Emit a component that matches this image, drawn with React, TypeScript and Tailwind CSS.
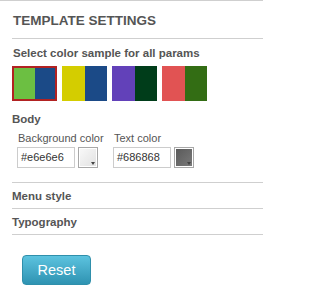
import React from 'react';

const swatches = [
  { left: '#6cbf42', right: '#1b4a87', active: true },
  { left: '#d4cd00', right: '#1b4a87', active: false },
  { left: '#6241b9', right: '#003d1a', active: false },
  { left: '#e15353', right: '#336d14', active: false },
];

const ColorPicker: React.FC<{ dark?: boolean }> = ({ dark }) => (
  <div className="relative w-[20px] h-[21px] border border-[#a8a8a8] p-px bg-white">
    <div
      className={
        dark
          ? 'w-full h-full bg-gradient-to-br from-[#5a5a5a] to-[#7a7a7a]'
          : 'w-full h-full bg-gradient-to-br from-[#f8f8f8] to-[#e2e2e2]'
      }
    />
    <div className="absolute right-[2px] bottom-[2px] w-0 h-0 border-l-[2px] border-r-[2px] border-t-[3px] border-l-transparent border-r-transparent border-t-[#444]" />
  </div>
);

const ColorField: React.FC<{ label: string; value: string; dark?: boolean; className?: string }> = ({
  label,
  value,
  dark,
  className,
}) => (
  <div className={'flex flex-col ' + (className ?? '')}>
    <span className="pl-px text-[11px] leading-[14px] text-[#555]">{label}</span>
    <div className="flex items-start gap-[3px] mt-[2px]">
      <div className="w-[58px] h-[21px] border border-[#ccc] px-[3px] text-[11px] leading-[19px] text-[#333]">
        {value}
      </div>
      <ColorPicker dark={dark} />
    </div>
  </div>
);

export default function App() {
  return (
    <div
      className="w-[263px] h-[296px] bg-white border-t border-[#cfcfcf] pl-[12px]"
      style={{ fontFamily: '"Liberation Sans", Arial, sans-serif' }}
    >
      <h2 className="pt-[12px] pb-[9px] pl-px border-b border-[#cfcfcf] text-[13.5px] leading-[16px] font-bold uppercase text-[#555]">
        Template settings
      </h2>

      <div className="mt-[7px] pl-px text-[11.5px] leading-[14px] font-bold text-[#555]">
        Select color sample for all params
      </div>
      <div className="flex gap-[5px] mt-[6px]">
        {swatches.map((s, i) => (
          <div
            key={i}
            className={
              s.active
                ? 'flex w-[45px] h-[35px] border-2 border-[#b22222]'
                : 'flex w-[45px] h-[35px]'
            }
          >
            <div className="flex-1" style={{ backgroundColor: s.left }} />
            <div className="flex-1" style={{ backgroundColor: s.right }} />
          </div>
        ))}
      </div>

      <div className="mt-[11px] text-[11.5px] leading-[14px] font-bold text-[#555]">Body</div>
      <div className="flex mt-[5px] pl-[5px] pb-[14px] border-b border-[#cfcfcf]">
        <ColorField label="Background color" value="#e6e6e6" className="w-[96px]" />
        <ColorField label="Text color" value="#686868" dark />
      </div>

      <div className="pt-[6px] pb-[5px] border-b border-[#cfcfcf] text-[11.5px] leading-[14px] font-bold text-[#555]">
        Menu style
      </div>
      <div className="pt-[6px] pb-[5px] border-b border-[#cfcfcf] text-[11.5px] leading-[14px] font-bold text-[#555]">
        Typography
      </div>

      <button className="mt-[20px] ml-[10px] w-[69px] h-[30px] rounded-[4px] border border-[#2f8fab] bg-gradient-to-b from-[#5cc3df] to-[#2e93b2] text-white text-[14.5px] leading-[28px]">
        Reset
      </button>
    </div>
  );
}
